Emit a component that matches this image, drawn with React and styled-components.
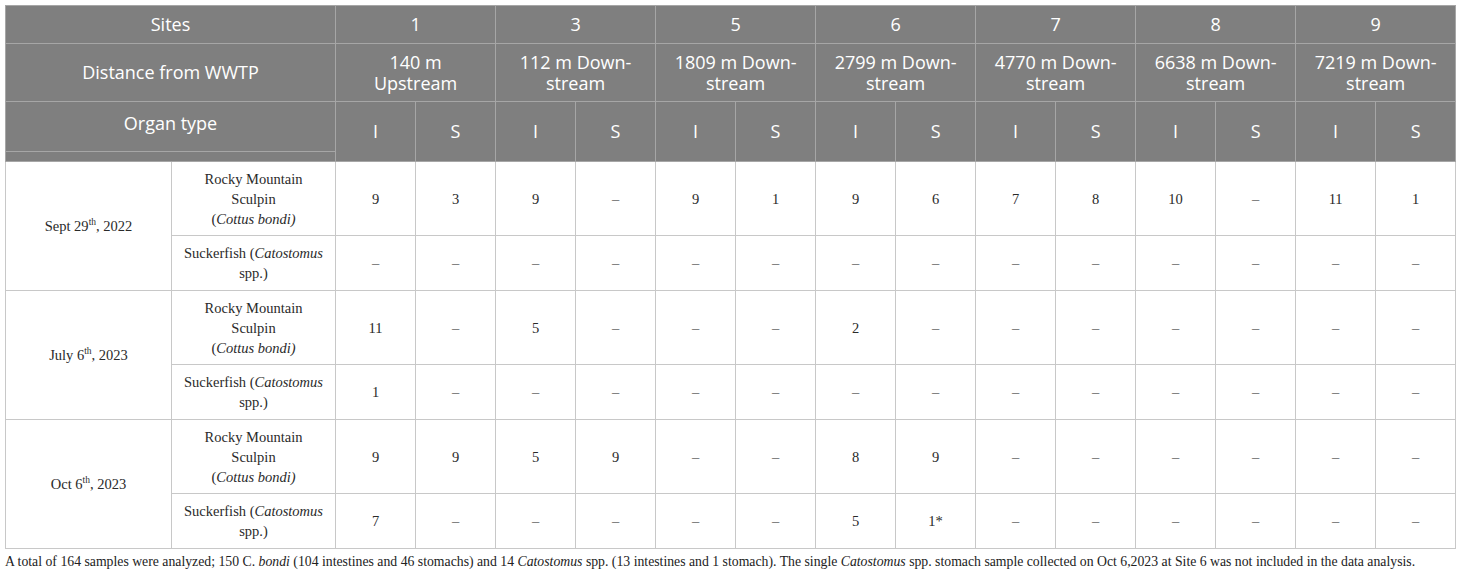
import React from 'react';
import styled, { createGlobalStyle } from 'styled-components';

const GlobalStyle = createGlobalStyle`
  body {
    margin: 0;
    padding: 5px;
    background: #fff;
  }
`;

const Wrap = styled.div`
  width: 1450px;
`;

const Table = styled.table`
  width: 1450px;
  table-layout: fixed;
  border-collapse: collapse;
  border: 1px solid #c8c8c8;
`;

const HeadRow = styled.tr`
  height: ${p => p.h}px;
`;

const Th = styled.th`
  background: #7f7f7f;
  color: #fff;
  font-family: "Open Sans", "DejaVu Sans", sans-serif;
  font-weight: 400;
  font-size: 18px;
  line-height: 21px;
  text-align: center;
  vertical-align: ${p => (p.top ? 'top' : 'middle')};
  padding: ${p => (p.top ? '11px 2px 0' : '0 2px')};
  border: 1px solid #a6a6a6;
`;

const BodyRow = styled.tr`
  height: ${p => p.h}px;
`;

const Td = styled.td`
  font-family: "Liberation Serif", "DejaVu Serif", serif;
  font-size: 14.5px;
  line-height: 20px;
  color: #2a2a2a;
  text-align: center;
  vertical-align: middle;
  padding: 0 6px;
  border: 1px solid #c8c8c8;
`;

const Dash = styled.span`
  color: #666;
`;

const Sup = styled.sup`
  font-size: 9.5px;
  line-height: 0;
`;

const Note = styled.p`
  margin: 5px 0 0;
  font-family: "Liberation Serif", "DejaVu Serif", serif;
  font-size: 13.75px;
  color: #222;
  white-space: nowrap;
`;

const sites = [
  ['1', <>140 m<br />Upstream</>],
  ['3', <>112 m Down-<br />stream</>],
  ['5', <>1809 m Down-<br />stream</>],
  ['6', <>2799 m Down-<br />stream</>],
  ['7', <>4770 m Down-<br />stream</>],
  ['8', <>6638 m Down-<br />stream</>],
  ['9', <>7219 m Down-<br />stream</>],
];

const d = '–';

const groups = [
  {
    date: <>Sept 29<Sup>th</Sup>, 2022</>,
    rocky: ['9', '3', '9', d, '9', '1', '9', '6', '7', '8', '10', d, '11', '1'],
    sucker: Array(14).fill(d),
  },
  {
    date: <>July 6<Sup>th</Sup>, 2023</>,
    rocky: ['11', d, '5', d, d, d, '2', d, d, d, d, d, d, d],
    sucker: ['1', d, d, d, d, d, d, d, d, d, d, d, d, d],
  },
  {
    date: <>Oct 6<Sup>th</Sup>, 2023</>,
    rocky: ['9', '9', '5', '9', d, d, '8', '9', d, d, d, d, d, d],
    sucker: ['7', d, d, d, d, d, '5', '1*', d, d, d, d, d, d],
  },
];

const Cells = ({ values }) =>
  values.map((v, i) => <Td key={i}>{v === d ? <Dash>{d}</Dash> : v}</Td>);

export default function App() {
  return (
    <Wrap>
      <GlobalStyle />
      <Table>
        <colgroup>
          <col style={{ width: 166 }} />
          <col style={{ width: 164 }} />
          {Array.from({ length: 14 }).map((_, i) => (
            <col key={i} style={{ width: 80 }} />
          ))}
        </colgroup>
        <thead>
          <HeadRow h={38}>
            <Th colSpan={2}>Sites</Th>
            {sites.map(([n]) => <Th key={n} colSpan={2}>{n}</Th>)}
          </HeadRow>
          <HeadRow h={58}>
            <Th colSpan={2}>Distance from WWTP</Th>
            {sites.map(([n, dist]) => <Th key={n} colSpan={2}>{dist}</Th>)}
          </HeadRow>
          <HeadRow h={50}>
            <Th colSpan={2} top>Organ type</Th>
            {sites.map(([n]) => (
              <React.Fragment key={n}>
                <Th rowSpan={2}>I</Th>
                <Th rowSpan={2}>S</Th>
              </React.Fragment>
            ))}
          </HeadRow>
          <HeadRow h={10}>
            <Th colSpan={2} />
          </HeadRow>
        </thead>
        <tbody>
          {groups.map((g, i) => (
            <React.Fragment key={i}>
              <BodyRow h={74}>
                <Td rowSpan={2}>{g.date}</Td>
                <Td>Rocky Mountain<br />Sculpin<br />(<i>Cottus bondi)</i></Td>
                <Cells values={g.rocky} />
              </BodyRow>
              <BodyRow h={55}>
                <Td>Suckerfish (<i>Catostomus</i><br />spp.)</Td>
                <Cells values={g.sucker} />
              </BodyRow>
            </React.Fragment>
          ))}
        </tbody>
      </Table>
      <Note>
        A total of 164 samples were analyzed; 150 C. <i>bondi</i> (104 intestines and 46 stomachs) and 14 <i>Catostomus</i> spp. (13 intestines and 1 stomach). The single <i>Catostomus</i> spp. stomach sample collected on Oct 6,2023 at Site 6 was not included in the data analysis.
      </Note>
    </Wrap>
  );
}
